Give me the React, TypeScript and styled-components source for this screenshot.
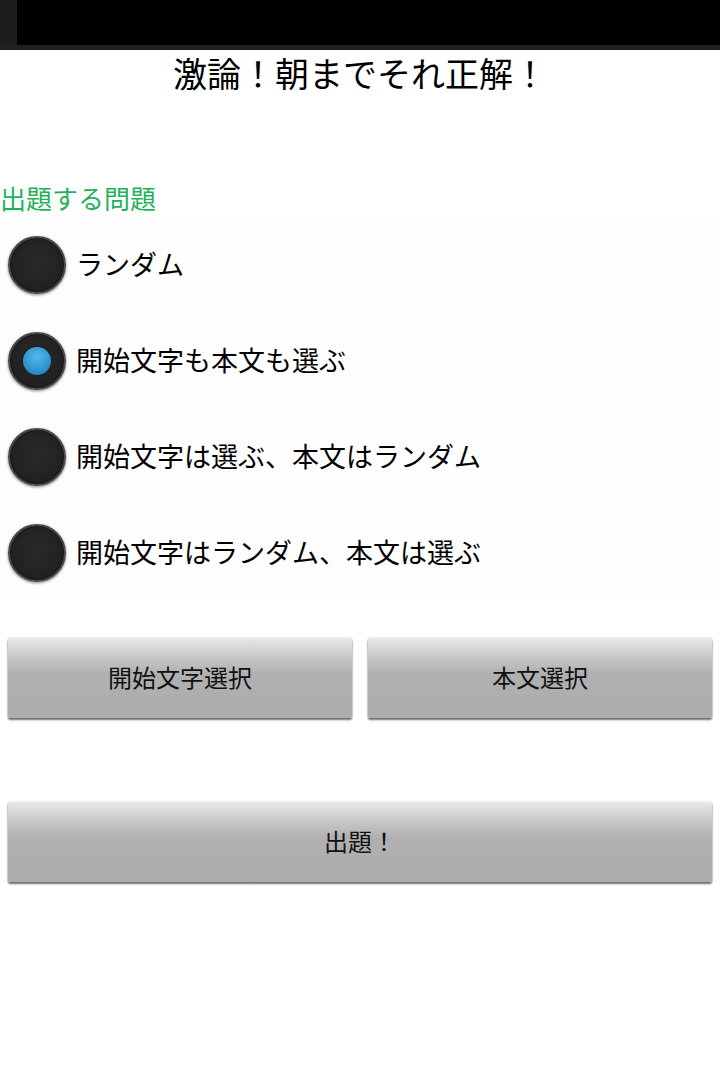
import React from "react";
import styled, { createGlobalStyle } from "styled-components";

const GlobalStyle = createGlobalStyle`
  html, body {
    margin: 0;
    padding: 0;
    background: #ffffff;
  }
  body {
    font-family: "Noto Sans CJK JP", "Noto Sans", sans-serif;
    color: #000;
  }
`;

const Screen = styled.div`
  width: 720px;
  min-height: 1084px;
  background: #ffffff;
  display: flex;
  flex-direction: column;
`;

const StatusBar = styled.div`
  height: 45px;
  display: flex;
  background: #000;
  border-bottom: 5px solid #222;
`;

const StatusEdge = styled.div`
  width: 17px;
  background: #1c1c1c;
`;

const Title = styled.h1`
  margin: 0;
  height: 46px;
  line-height: 46px;
  font-size: 34px;
  font-weight: 400;
  text-align: center;
`;

const Heading = styled.div`
  margin-top: 85px;
  height: 36px;
  line-height: 34px;
  font-size: 26px;
  color: #1fb25a;
`;

const RadioGroup = styled.div`
  background: #fefefe;
  display: flex;
  flex-direction: column;
`;

const RadioRow = styled.label`
  height: 96px;
  display: flex;
  align-items: center;
  gap: 10px;
  padding-left: 8px;
  font-size: 27px;
`;

const RadioText = styled.span`
  line-height: 1;
  padding-bottom: 4px;
`;

const RadioCircle = styled.span<{ $checked?: boolean }>`
  width: 58px;
  height: 58px;
  box-sizing: border-box;
  border-radius: 50%;
  border: 2px solid #4a4a4a;
  background: radial-gradient(circle at 50% 45%, #2a2a2a 0%, #222 60%, #161616 100%);
  box-shadow: 0 1px 3px rgba(0, 0, 0, 0.5), inset 0 0 2px rgba(0, 0, 0, 0.8);
  display: flex;
  align-items: center;
  justify-content: center;
  flex-shrink: 0;

  &::after {
    content: "";
    display: ${(p) => (p.$checked ? "block" : "none")};
    width: 28px;
    height: 28px;
    border-radius: 50%;
    background: radial-gradient(circle at 50% 35%, #55b8ec 0%, #2d95cf 60%, #1f74a8 100%);
    box-shadow: 0 0 2px rgba(0, 0, 0, 0.6);
  }
`;

const ButtonRow = styled.div`
  display: grid;
  grid-template-columns: 1fr 1fr;
  column-gap: 16px;
  padding: 37px 8px 0;
`;

const GreyButton = styled.button`
  height: 80px;
  border: none;
  border-radius: 2px;
  padding: 0 0 4px;
  background: linear-gradient(to bottom, #e9e9e9 0%, #c9c9c9 22%, #b0b0b0 45%, #adadad 100%);
  box-shadow: 0 2px 2px rgba(0, 0, 0, 0.55), 0 0 2px rgba(0, 0, 0, 0.25);
  font-family: "Noto Sans CJK JP", "Noto Sans", sans-serif;
  font-size: 24px;
  color: #111;
  cursor: pointer;
`;

const SubmitWrap = styled.div`
  padding: 84px 8px 0;
  display: flex;
  flex-direction: column;
`;

const options = [
  "ランダム",
  "開始文字も本文も選ぶ",
  "開始文字は選ぶ、本文はランダム",
  "開始文字はランダム、本文は選ぶ",
];

export default function App() {
  const [selected, setSelected] = React.useState(1);
  return (
    <Screen>
      <GlobalStyle />
      <StatusBar>
        <StatusEdge />
      </StatusBar>
      <Title>激論！朝までそれ正解！</Title>
      <Heading>出題する問題</Heading>
      <RadioGroup>
        {options.map((o, i) => (
          <RadioRow key={o} onClick={() => setSelected(i)}>
            <RadioCircle $checked={selected === i} />
            <RadioText>{o}</RadioText>
          </RadioRow>
        ))}
      </RadioGroup>
      <ButtonRow>
        <GreyButton>開始文字選択</GreyButton>
        <GreyButton>本文選択</GreyButton>
      </ButtonRow>
      <SubmitWrap>
        <GreyButton>出題！</GreyButton>
      </SubmitWrap>
    </Screen>
  );
}
